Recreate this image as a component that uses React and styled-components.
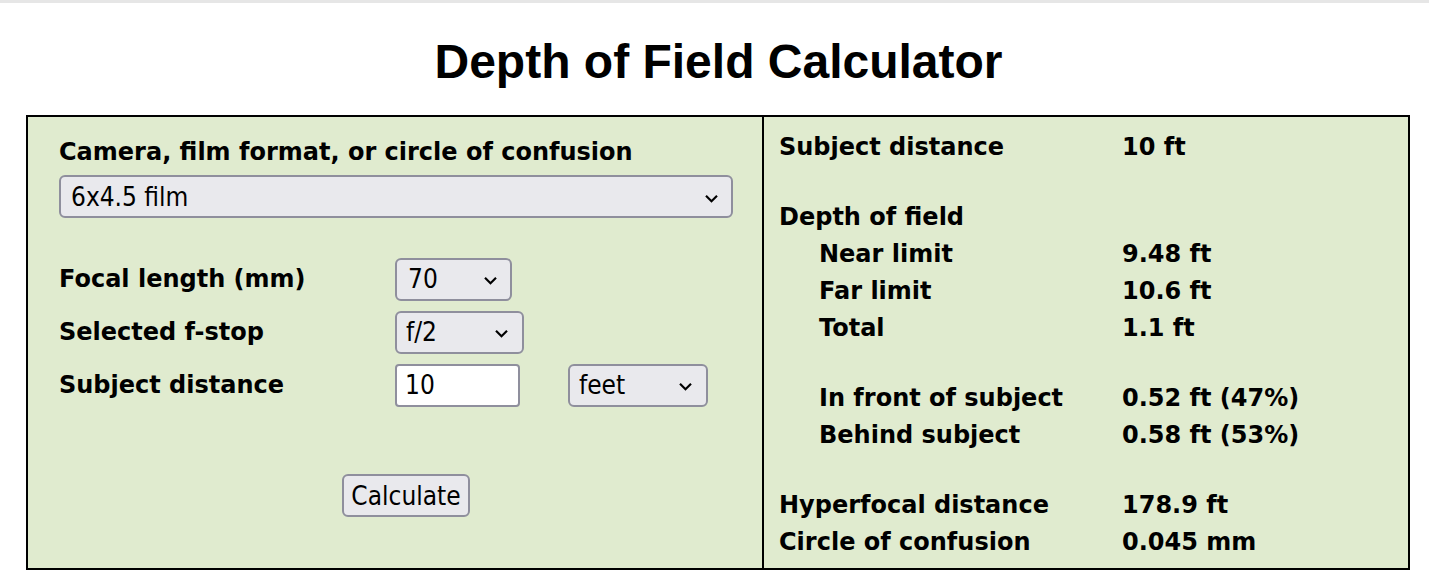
import React from 'react';
import styled, {createGlobalStyle} from 'styled-components';

const GlobalStyle = createGlobalStyle`
    html, body {
        margin: 0;
        padding: 0;
        background: #ffffff;
    }
    body {
        font-family: "DejaVu Sans", Verdana, sans-serif;
        color: #000;
    }
`;

const Page = styled.div`
    width: 1429px;
    height: 571px;
    overflow: hidden;
`;

const TopRule = styled.div`
    height: 3px;
    background: #e6e6e6;
`;

const Title = styled.h1`
    margin: 31px 0 26px 8px;
    font-family: "Liberation Sans", Arial, sans-serif;
    font-size: 48px;
    font-weight: bold;
    line-height: 55px;
    text-align: center;
`;

const Calc = styled.div`
    display: grid;
    grid-template-columns: 736px 1fr;
    margin: 0 19px 0 26px;
    border: 2px solid #000;
    background: #e0ebcf;
`;

const InputPanel = styled.div`
    padding: 22px 0 0 31px;
    border-right: 2px solid #000;
`;

const Label = styled.div`
    font-size: 24px;
    font-weight: bold;
    line-height: 26px;
`;

const SelectWrap = styled.div`
    position: relative;
    width: ${p => p.$w}px;
    height: 43px;
`;

const Select = styled.select`
    appearance: none;
    -webkit-appearance: none;
    box-sizing: border-box;
    width: 100%;
    height: 100%;
    margin: 0;
    padding: 0 30px 0 ${p => p.$pad || 10}px;
    background: #e9e9ed;
    border: 2px solid #8f8f9d;
    border-radius: 6px;
    font-family: "DejaVu Sans Condensed", "Liberation Sans", Arial, sans-serif;
    font-size: 26px;
    color: #000;
    outline: none;
`;

const Chevron = styled.svg`
    position: absolute;
    right: ${p => p.$r}px;
    top: 50%;
    width: 15px;
    height: 9px;
    margin-top: -3px;
    pointer-events: none;
`;

const CameraSelect = styled(SelectWrap)`
    margin-top: 10px;
`;

const FormGrid = styled.div`
    display: grid;
    grid-template-columns: 336px auto;
    row-gap: 9px;
    margin-top: 39px;
    align-items: center;
`;

const ControlRow = styled.div`
    display: flex;
    align-items: center;
    gap: 48px;
    height: 44px;
`;

const TextInput = styled.input`
    box-sizing: border-box;
    width: 125px;
    height: 43px;
    margin: 0;
    padding: 0 8px;
    background: #fff;
    border: 2px solid #8f8f9d;
    border-radius: 4px;
    font-family: "DejaVu Sans Condensed", "Liberation Sans", Arial, sans-serif;
    font-size: 26px;
    color: #000;
    outline: none;
`;

const Button = styled.button`
    box-sizing: border-box;
    display: block;
    width: 128px;
    height: 43px;
    margin: 67px 0 0 283px;
    padding: 0;
    background: #e9e9ed;
    border: 2px solid #8f8f9d;
    border-radius: 6px;
    font-family: "DejaVu Sans Condensed", "Liberation Sans", Arial, sans-serif;
    font-size: 26px;
    color: #000;
`;

const ResultPanel = styled.div`
    padding: 11px 0 8px 15px;
`;

const ResultRow = styled.div`
    display: grid;
    grid-template-columns: 343px 1fr;
    align-items: center;
    height: 37px;
    font-size: 24px;
    font-weight: bold;
    line-height: 26px;
`;

const RowLabel = styled.div`
    padding-left: ${p => (p.$indent ? 40 : 0)}px;
`;

const Spacer = styled.div`
    height: 33px;
`;

const ChevronIcon = ({right}) => (
    <Chevron $r={right} viewBox="0 0 15 9">
        <polyline points="2,1.8 7.5,7.2 13,1.8" fill="none" stroke="#000" strokeWidth="2.2" />
    </Chevron>
);

const Dropdown = ({width, pad, right, value}) => (
    <SelectWrap $w={width}>
        <Select $pad={pad} defaultValue={value}>
            <option>{value}</option>
        </Select>
        <ChevronIcon right={right} />
    </SelectWrap>
);

const results = [
    {label: 'Subject distance', value: '10 ft'},
    null,
    {label: 'Depth of field', value: ''},
    {label: 'Near limit', value: '9.48 ft', indent: true},
    {label: 'Far limit', value: '10.6 ft', indent: true},
    {label: 'Total', value: '1.1 ft', indent: true},
    null,
    {label: 'In front of subject', value: '0.52 ft (47%)', indent: true},
    {label: 'Behind subject', value: '0.58 ft (53%)', indent: true},
    null,
    {label: 'Hyperfocal distance', value: '178.9 ft'},
    {label: 'Circle of confusion', value: '0.045 mm'},
];

const App = () => {
    return (
        <Page>
            <GlobalStyle />
            <TopRule />
            <Title>Depth of Field Calculator</Title>
            <Calc>
                <InputPanel>
                    <Label>Camera, film format, or circle of confusion</Label>
                    <CameraSelect $w={674}>
                        <Select $pad={10} defaultValue="6x4.5 film">
                            <option>6x4.5 film</option>
                        </Select>
                        <ChevronIcon right={14} />
                    </CameraSelect>
                    <FormGrid>
                        <Label>Focal length (mm)</Label>
                        <ControlRow>
                            <Dropdown width={117} pad={11} right={14} value="70" />
                        </ControlRow>
                        <Label>Selected f-stop</Label>
                        <ControlRow>
                            <Dropdown width={129} pad={9} right={15} value="f/2" />
                        </ControlRow>
                        <Label>Subject distance</Label>
                        <ControlRow>
                            <TextInput defaultValue="10" />
                            <Dropdown width={140} pad={9} right={15} value="feet" />
                        </ControlRow>
                    </FormGrid>
                    <Button>Calculate</Button>
                </InputPanel>
                <ResultPanel>
                    {results.map((r, i) =>
                        r ? (
                            <ResultRow key={i}>
                                <RowLabel $indent={r.indent}>{r.label}</RowLabel>
                                <div>{r.value}</div>
                            </ResultRow>
                        ) : (
                            <Spacer key={i} />
                        )
                    )}
                </ResultPanel>
            </Calc>
        </Page>
    );
};

export default App;
